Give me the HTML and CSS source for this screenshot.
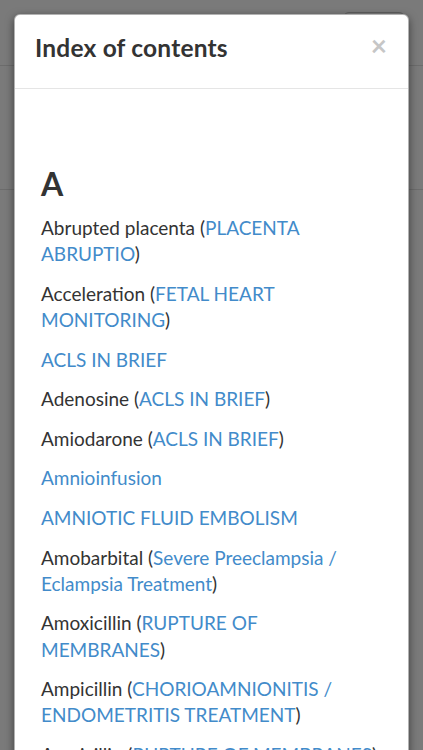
FILE: index.html
```html
<!DOCTYPE html>
<html>
<head>
<meta charset="utf-8">
<link rel="stylesheet" href="styles.css">
</head>
<body>
<div class="page">
  <div class="bg-nav"><span class="bg-btn"></span></div>
  <div class="bg-row"></div>
  <div class="bg-rest"></div>
</div>
<div class="backdrop"></div>
<div class="modal">
  <div class="modal-header">
    <h4 class="modal-title">Index of contents</h4>
    <span class="close">&times;</span>
  </div>
  <div class="modal-body">
    <div class="spacer"></div>
    <h2 class="letter">A</h2>
    <p class="entry">Abrupted placenta (<a>PLACENTA ABRUPTIO</a>)</p>
    <p class="entry">Acceleration (<a>FETAL HEART MONITORING</a>)</p>
    <p class="entry"><a>ACLS IN BRIEF</a></p>
    <p class="entry">Adenosine (<a>ACLS IN BRIEF</a>)</p>
    <p class="entry">Amiodarone (<a>ACLS IN BRIEF</a>)</p>
    <p class="entry"><a>Amnioinfusion</a></p>
    <p class="entry"><a>AMNIOTIC FLUID EMBOLISM</a></p>
    <p class="entry">Amobarbital (<a>Severe Preeclampsia / Eclampsia Treatment</a>)</p>
    <p class="entry">Amoxicillin (<a>RUPTURE OF MEMBRANES</a>)</p>
    <p class="entry">Ampicillin (<a>CHORIOAMNIONITIS / ENDOMETRITIS TREATMENT</a>)</p>
    <p class="entry">Ampicillin (<a>RUPTURE OF MEMBRANES</a>)</p>
  </div>
</div>
</body>
</html>
```

FILE: styles.css
```css
html, body {
  margin: 0;
  padding: 0;
  width: 423px;
  height: 750px;
  overflow: hidden;
  font-family: "Lato", "Liberation Sans", sans-serif;
}
.page {
  width: 423px;
  height: 750px;
  background: #f5f5f5;
}
.bg-nav {
  height: 66px;
  border-bottom: 1px solid #d8d8d8;
  box-sizing: border-box;
  display: flex;
  justify-content: flex-end;
  padding: 12px 18px 0 0;
}
.bg-btn {
  width: 62px;
  height: 40px;
  border: 1px solid #bbb;
  border-radius: 6px;
  box-sizing: border-box;
}
.bg-row {
  height: 124px;
  border-bottom: 1px solid #d8d8d8;
  box-sizing: border-box;
}
.backdrop {
  position: absolute;
  left: 0;
  top: 0;
  width: 423px;
  height: 750px;
  background: rgba(0, 0, 0, 0.5);
}
.modal {
  position: absolute;
  left: 14px;
  top: 14px;
  width: 395px;
  height: 800px;
  background: #fff;
  border: 1px solid rgba(0, 0, 0, 0.3);
  border-radius: 6px;
  box-sizing: border-box;
  box-shadow: 0 3px 9px rgba(0, 0, 0, 0.5);
}
.modal-header {
  height: 73px;
  border-bottom: 1px solid #e5e5e5;
  display: flex;
  align-items: center;
  justify-content: space-between;
  padding: 0 21px 0 20px;
}
.modal-title {
  margin: 0 0 9px 0;
  font-size: 24.5px;
  font-weight: 700;
  color: #333;
  letter-spacing: 0.2px;
}
.close {
  font-size: 28px;
  font-weight: 700;
  color: #c6c6c6;
  line-height: 1;
  margin-top: -14px;
}
.modal-body {
  padding: 0 30px 0 26px;
}
.spacer {
  height: 75px;
}
.letter {
  margin: 0 0 11px 0;
  font-size: 32px;
  font-weight: 700;
  color: #333;
  line-height: 40px;
}
.entry {
  margin: 0 0 13.4px 0;
  font-size: 19px;
  line-height: 26.2px;
  color: #333;
}
.entry a {
  color: #428bca;
}
```
